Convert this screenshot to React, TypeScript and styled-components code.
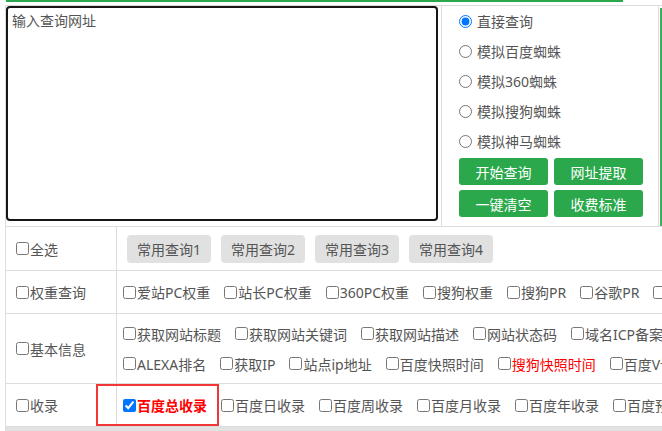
import React from 'react'
import styled, { createGlobalStyle } from 'styled-components'

const GlobalStyle = createGlobalStyle`
  html, body {
    margin: 0;
    padding: 0;
    background: #fff;
    overflow: hidden;
  }
  body {
    font-family: "Noto Sans", "Noto Sans CJK SC", sans-serif;
    font-size: 14px;
    color: #555;
  }
`

const Page = styled.div`
  width: 1000px;
  padding-left: 5px;
`

const TopLine = styled.div`
  width: 617px;
  height: 2px;
  margin: 0 0 3px 1px;
  background: #2aa84b;
`

const Board = styled.div`
  border-left: 1px solid #ddd;
  border-top: 1px solid #ddd;
  border-bottom: 4px solid #e2e2e2;
`

const QueryRow = styled.div`
  display: flex;
  height: 220px;
  border-bottom: 1px solid #ddd;
`

const InputCell = styled.div`
  width: 436px;
  flex: none;
  border-right: 1px solid #ddd;
  box-sizing: border-box;
`

const UrlBox = styled.textarea`
  display: block;
  width: 432px;
  height: 215px;
  box-sizing: border-box;
  border: 2px solid #161616;
  border-radius: 4px;
  padding: 3px 4px;
  resize: none;
  outline: none;
  font-family: inherit;
  font-size: 14px;
  line-height: 20px;
  color: #333;

  &::placeholder {
    color: #555;
  }
`

const ModeCell = styled.div`
  width: 217px;
  flex: none;
  border-right: 1px solid #ddd;
  box-sizing: border-box;
  padding-left: 17px;
`

const RadioLine = styled.label`
  display: flex;
  align-items: center;
  height: 30px;
`

const Radio = styled.input.attrs({ type: 'radio', name: 'mode' })`
  width: 13px;
  height: 13px;
  margin: 0 5px 0 0;
`

const ActionGrid = styled.div`
  display: grid;
  grid-template-columns: 89px 89px;
  gap: 5px 6px;
  margin-top: 2px;
`

const GreenButton = styled.button`
  height: 27px;
  padding: 0;
  border: 0;
  border-radius: 3px;
  background: #2aa84b;
  color: #fff;
  font-family: inherit;
  font-size: 14px;
`

const SideCell = styled.div`
  flex: 1;
  padding: 2px 0 0 1px;
`

const SidePanel = styled.div`
  height: 100%;
  border: 2px solid #3cb05a;
  border-bottom: 0;
  box-sizing: border-box;
`

const OptRow = styled.div<{ $h: number }>`
  position: relative;
  display: flex;
  height: ${p => p.$h}px;
  border-bottom: 1px solid #ddd;
`

const LabelCell = styled.label`
  width: 111px;
  flex: none;
  display: flex;
  align-items: center;
  padding-left: 9px;
  box-sizing: border-box;
  border-right: 1px solid #ddd;
`

const OptCell = styled.div`
  flex: 1;
  display: flex;
  flex-direction: column;
  justify-content: center;
  padding: 0 5px;
  overflow: hidden;
`

const Line = styled.div`
  display: flex;
  align-items: center;
  height: 30px;
  white-space: nowrap;
`

const Check = styled.input.attrs({ type: 'checkbox' })`
  width: 13px;
  height: 13px;
  margin: 0 1px;
  flex: none;
`

const Item = styled.label<{ $tone?: 'red' | 'strong' }>`
  display: flex;
  align-items: center;
  margin-right: 13px;
  flex: none;
  color: ${p => (p.$tone ? '#f00' : '#555')};
  font-weight: ${p => (p.$tone === 'strong' ? 700 : 400)};
`

const GrayButton = styled.button`
  height: 28px;
  margin: 0 5px;
  padding: 0 10px;
  border: 0;
  border-radius: 4px;
  background: #e1e1e1;
  color: #555;
  font-family: inherit;
  font-size: 14px;
  flex: none;
`

const Highlight = styled.div`
  position: absolute;
  left: 90px;
  top: 0;
  width: 123px;
  height: 42px;
  border: 2px solid #f23535;
  box-sizing: border-box;
  pointer-events: none;
`

type Opt = { text: string; tone?: 'red' | 'strong'; checked?: boolean }

const Options = ({ list }: { list: Opt[] }) => (
  <Line>
    {list.map(o => (
      <Item key={o.text} $tone={o.tone}>
        <Check defaultChecked={o.checked} />
        {o.text}
      </Item>
    ))}
  </Line>
)

const weights: Opt[] = [
  { text: '爱站PC权重' },
  { text: '站长PC权重' },
  { text: '360PC权重' },
  { text: '搜狗权重' },
  { text: '搜狗PR' },
  { text: '谷歌PR' },
  { text: '神马权重' },
]

const basic1: Opt[] = [
  { text: '获取网站标题' },
  { text: '获取网站关键词' },
  { text: '获取网站描述' },
  { text: '网站状态码' },
  { text: '域名ICP备案' },
]

const basic2: Opt[] = [
  { text: 'ALEXA排名' },
  { text: '获取IP' },
  { text: '站点ip地址' },
  { text: '百度快照时间' },
  { text: '搜狗快照时间', tone: 'red' },
  { text: '百度V认证' },
]

const indexed: Opt[] = [
  { text: '百度总收录', tone: 'strong', checked: true },
  { text: '百度日收录' },
  { text: '百度周收录' },
  { text: '百度月收录' },
  { text: '百度年收录' },
  { text: '百度预估流量' },
]

const modes = ['直接查询', '模拟百度蜘蛛', '模拟360蜘蛛', '模拟搜狗蜘蛛', '模拟神马蜘蛛']

export default function App() {
  return (
    <>
      <GlobalStyle />
      <Page>
        <TopLine />
        <Board>
          <QueryRow>
            <InputCell>
              <UrlBox placeholder="输入查询网址" />
            </InputCell>
            <ModeCell>
              {modes.map((m, i) => (
                <RadioLine key={m}>
                  <Radio defaultChecked={i === 0} />
                  {m}
                </RadioLine>
              ))}
              <ActionGrid>
                <GreenButton>开始查询</GreenButton>
                <GreenButton>网址提取</GreenButton>
                <GreenButton>一键清空</GreenButton>
                <GreenButton>收费标准</GreenButton>
              </ActionGrid>
            </ModeCell>
            <SideCell>
              <SidePanel />
            </SideCell>
          </QueryRow>

          <OptRow $h={43}>
            <LabelCell>
              <Check />
              全选
            </LabelCell>
            <OptCell>
              <Line>
                <GrayButton>常用查询1</GrayButton>
                <GrayButton>常用查询2</GrayButton>
                <GrayButton>常用查询3</GrayButton>
                <GrayButton>常用查询4</GrayButton>
              </Line>
            </OptCell>
          </OptRow>

          <OptRow $h={42}>
            <LabelCell>
              <Check />
              权重查询
            </LabelCell>
            <OptCell>
              <Options list={weights} />
            </OptCell>
          </OptRow>

          <OptRow $h={69}>
            <LabelCell>
              <Check />
              基本信息
            </LabelCell>
            <OptCell>
              <Options list={basic1} />
              <Options list={basic2} />
            </OptCell>
          </OptRow>

          <OptRow $h={42}>
            <LabelCell>
              <Check />
              收录
            </LabelCell>
            <OptCell>
              <Options list={indexed} />
            </OptCell>
            <Highlight />
          </OptRow>
        </Board>
      </Page>
    </>
  )
}
